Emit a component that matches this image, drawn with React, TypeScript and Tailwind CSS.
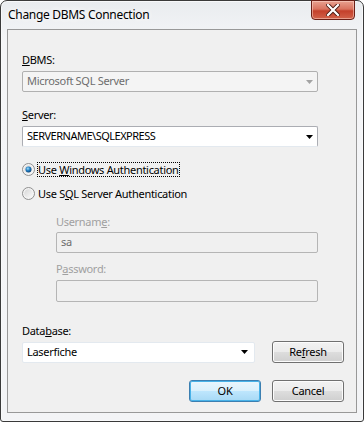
import React from "react";

const font = { fontFamily: '"Noto Sans", "Open Sans", sans-serif' };

function Arrow({ disabled }: { disabled?: boolean }) {
  return (
    <svg width="7" height="4" viewBox="0 0 7 4" className="shrink-0">
      <path d="M0 0h7L3.5 4z" fill={disabled ? "#a3a3a3" : "#000"} />
    </svg>
  );
}

function Radio({ checked }: { checked?: boolean }) {
  return (
    <svg width="13" height="13" viewBox="0 0 13 13" className="shrink-0">
      <defs>
        <linearGradient id={checked ? "rgc" : "rgu"} x1="0" y1="0" x2="1" y2="1">
          <stop offset="0" stopColor="#d6d6d6" />
          <stop offset="1" stopColor="#fbfbfb" />
        </linearGradient>
        <radialGradient id="dot" cx="0.4" cy="0.35" r="0.7">
          <stop offset="0" stopColor="#a4e0fb" />
          <stop offset="0.5" stopColor="#1e7bc1" />
          <stop offset="1" stopColor="#0d3e6e" />
        </radialGradient>
      </defs>
      <circle cx="6.5" cy="6.5" r="6" fill="#f4f4f4" stroke="#8f8f8f" />
      <circle cx="6.5" cy="6.5" r="4.3" fill={`url(#${checked ? "rgc" : "rgu"})`} />
      {checked && <circle cx="6.5" cy="6.5" r="3" fill="url(#dot)" />}
    </svg>
  );
}

function Btn({ children, primary }: { children: React.ReactNode; primary?: boolean }) {
  return (
    <div
      className={
        "w-[72px] h-[22px] rounded-[3px] border flex items-center justify-center text-black " +
        (primary
          ? "border-[#3c7fb1] bg-[linear-gradient(#eaf6fd_0%,#d9f0fc_50%,#bee6fd_51%,#a7d9f5_100%)] shadow-[inset_0_0_0_1px_#48b2e8]"
          : "border-[#707070] bg-[linear-gradient(#f2f2f2_0%,#ebebeb_50%,#dddddd_51%,#cfcfcf_100%)] shadow-[inset_0_0_0_1px_#fcfcfc]")
      }
    >
      {children}
    </div>
  );
}

export default function App() {
  return (
    <div style={font} className="w-[364px] h-[422px] bg-white">
      <div className="relative w-[364px] h-[422px] flex flex-col rounded-t-[7px] rounded-b-[3px] border border-[#3a3a3a] bg-[linear-gradient(#e9ecef,#f4f5f7_40px,#f3f4f6)] shadow-[inset_0_0_0_1px_#f8f9fa]">
        <div className="h-[28px] flex items-start">
          <div className="pl-[7px] pt-[5px] text-[12px] tracking-[-0.3px] leading-[18px] text-black [text-shadow:0_0_6px_#fff,0_0_10px_#fff]">
            Change DBMS Connection
          </div>
          <div className="ml-auto mr-[8px] -mt-px w-[44px] h-[20px] rounded-b-[4px] border border-[#6b1f16] bg-[linear-gradient(#e8a190_0%,#d9735f_45%,#c4402b_55%,#d2624a_100%)] shadow-[inset_0_0_0_1px_rgba(255,220,210,0.5)] flex items-center justify-center">
            <svg width="14" height="12" viewBox="0 0 14 12">
              <path d="M2 1l10 10M12 1L2 11" stroke="#4a1a12" strokeWidth="4" strokeLinecap="square" />
              <path d="M2 1l10 10M12 1L2 11" stroke="#fff" strokeWidth="2.2" strokeLinecap="square" />
            </svg>
          </div>
        </div>
        <div className="mx-[6px] h-[384px] border border-[#989898] bg-[#f0f0f0] flex flex-col pl-[14px] pr-[12px] pt-[22px] text-[11px] tracking-[-0.3px] text-black">
          <div className="h-[16px] leading-[16px]">
            <span className="underline">D</span>BMS:
          </div>
          <div className="mt-[3px] w-[296px] h-[21px] rounded-[2px] border border-[#b0b0b0] bg-[#f4f4f4] flex items-center pl-[4px] pr-[4px] text-[#6d6d6d]">
            <span className="flex-1">Microsoft SQL Server</span>
            <Arrow disabled />
          </div>

          <div className="mt-[15px] h-[16px] leading-[16px]">
            <span className="underline">S</span>erver:
          </div>
          <div className="mt-[3px] w-[296px] h-[21px] rounded-[2px] border border-[#abadb3] border-b-[#e3e9ef] bg-white flex items-center pl-[4px] pr-[4px]">
            <span className="flex-1 tracking-[-0.5px]">SERVERNAME\SQLEXPRESS</span>
            <Arrow />
          </div>

          <div className="mt-[14px] h-[16px] flex items-center">
            <Radio checked />
            <span className="ml-[2px] px-px leading-[15px] outline-1 outline-dotted outline-black -outline-offset-1">
              Use <span className="underline">W</span>indows Authentication
            </span>
          </div>
          <div className="mt-[8px] h-[16px] flex items-center">
            <Radio />
            <span className="ml-[3px] leading-[15px]">
              Use S<span className="underline">Q</span>L Server Authentication
            </span>
          </div>

          <div className="ml-[34px] flex flex-col text-[#a0a0a0]">
            <div className="mt-[13px] h-[16px] leading-[16px]">
              Usernam<span className="underline">e</span>:
            </div>
            <div className="mt-[2px] w-[262px] h-[21px] rounded-[2px] border border-[#b5b5b5] bg-[#f0f0f0] flex items-center pl-[4px] text-[#6d6d6d]">
              sa
            </div>
            <div className="mt-[8px] h-[16px] leading-[16px]">
              P<span className="underline">a</span>ssword:
            </div>
            <div className="mt-[3px] w-[262px] h-[22px] rounded-[2px] border border-[#b5b5b5] bg-[#f0f0f0]" />
          </div>

          <div className="mt-[21px] h-[16px] leading-[16px]">
            Data<span className="underline">b</span>ase:
          </div>
          <div className="mt-[2px] flex items-center">
            <div className="w-[233px] h-[21px] rounded-[2px] border border-[#e3e9ef] bg-white flex items-center pl-[4px] pr-[6px]">
              <span className="flex-1">Laserfiche</span>
              <Arrow />
            </div>
            <div className="ml-auto">
              <Btn>
                Re<span className="underline">f</span>resh
              </Btn>
            </div>
          </div>

          <div className="mt-[17px] flex justify-end gap-[11px]">
            <Btn primary>OK</Btn>
            <Btn>Cancel</Btn>
          </div>
        </div>
      </div>
    </div>
  );
}
